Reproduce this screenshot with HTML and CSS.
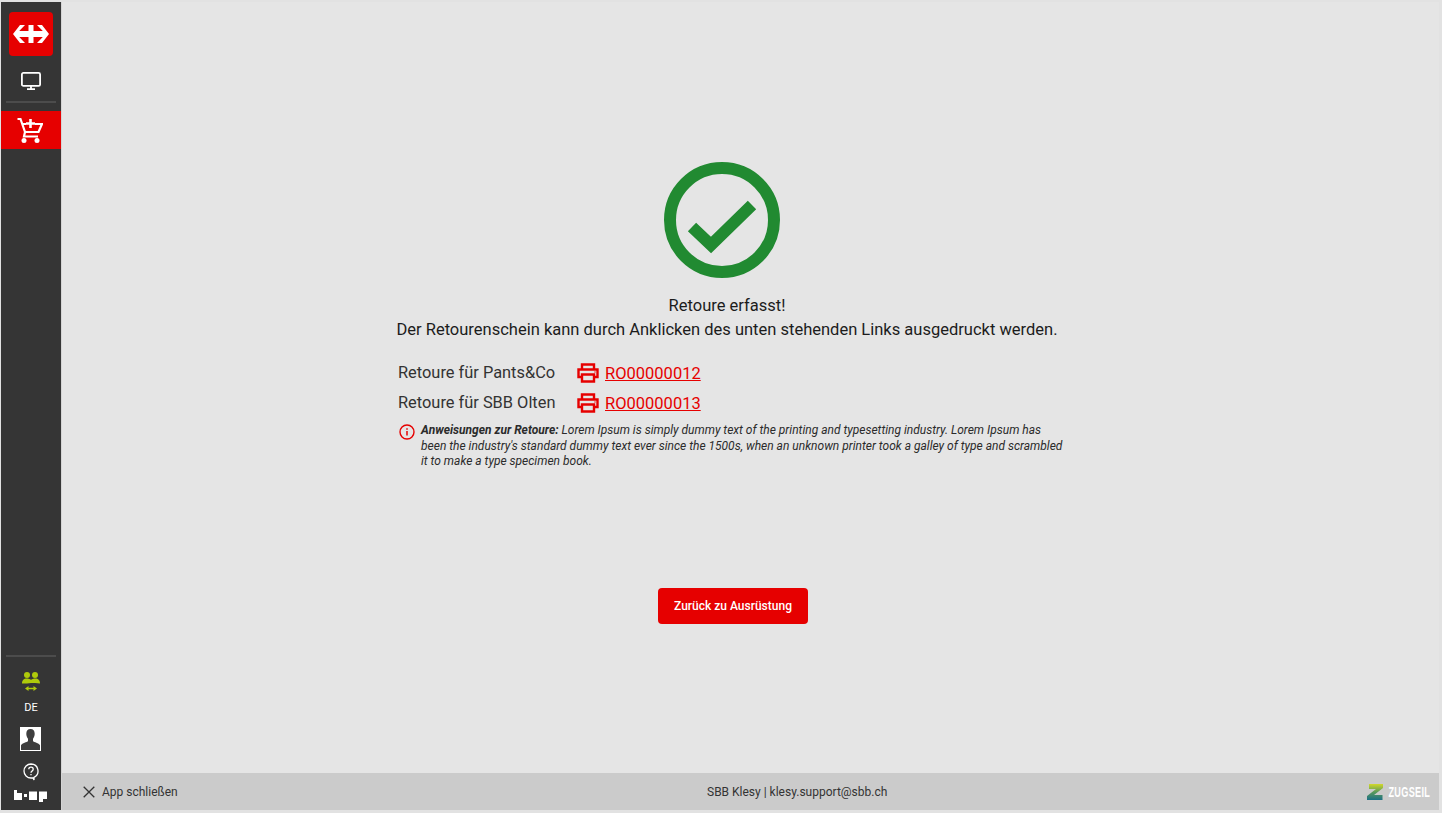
FILE: index.html
```html
<!DOCTYPE html>
<html lang="de">
<head>
    <meta charset="UTF-8">
    <title>SBB Klesy</title>
    <link rel="stylesheet" href="styles.css">
</head>
<body>
    <div class="app">
        <nav class="sidebar">
            <a class="logo">
                <svg width="36" height="18" viewBox="0 0 36 18"><path fill="#fff" d="M7 0h5L6.200 6h9.300V0h5v6h9.300L24 0h5l7 9-7 9h-5l5.800-6h-9.300v6h-5v-6H6.200L12 18H7L0 9z"/></svg>
            </a>
            <a class="nav-item nav-screen">
                <svg width="22" height="20" viewBox="0 0 22 20" fill="none" stroke="#fff" stroke-width="1.800"><rect x="1.900" y="1.900" width="18.200" height="13" rx="1.500"/><path d="M11 15v3M7 18.100h8"/></svg>
            </a>
            <hr class="nav-line">
            <a class="nav-item nav-cart">
                <svg width="26" height="27" viewBox="0 0 26 27" fill="none" stroke="#fff" stroke-width="2.200"><path d="M.5 2h3L8 15l-1 4.500h14M4.800 7H9M18 7h7l-3.500 8H8"/><path d="M13.500 2v9M9 6.500h9" stroke-width="2.600"/><circle cx="7" cy="23.500" r="2.500" fill="#fff" stroke="none"/><circle cx="20" cy="23.500" r="2.500" fill="#fff" stroke="none"/></svg>
            </a>
            <div class="sidebar-bottom">
                <hr class="nav-line">
                <a class="nav-users">
                    <svg width="18" height="19" viewBox="0 0 18 19" fill="#afca0b"><circle cx="5" cy="3" r="3"/><circle cx="13" cy="3" r="3"/><path d="M0 11.500c0-3.500 2-5 4.500-5 2 0 3.500.5 4.500 1.500 1-1 2.500-1.500 4.500-1.500 2.500 0 4.500 1.500 4.500 5l-5-.5H9l-4 .5z"/><path d="M5 16.500h8" stroke="#afca0b" stroke-width="1.500"/><path d="M6.500 14 3 16.500 6.500 19zM11.500 14l3.500 2.500-3.500 2.500z"/></svg>
                </a>
                <span class="lang">DE</span>
                <a class="avatar">
                    <svg width="21" height="24" viewBox="0 0 21 24"><rect width="21" height="24" fill="#fff"/><path fill="#3e3e3e" d="M10.500 2c2.800 0 4.200 2 4.200 4.800 0 2.200-.8 3.800-1.700 4.900v2.600c1 1 5.800 1.700 7 3.900V23H1v-4.800c1.200-2.200 6-2.900 7-3.900v-2.600C7.100 10.600 6.300 9 6.300 6.800 6.300 4 7.700 2 10.500 2z"/></svg>
                </a>
                <a class="help">
                    <svg width="16" height="18" viewBox="0 0 16 18" fill="none" stroke="#fff" stroke-width="1.300"><path d="M8 1a7 7 0 1 0 0 14h2l1 2v-2.700A7 7 0 0 0 8 1z"/><path d="M5.800 6.300C5.800 5 6.800 4.200 8 4.200s2.200.8 2.200 2c0 1.700-2.200 1.800-2.200 3.500"/><path d="M8 11v1.300"/></svg>
                </a>
                <div class="bap">
                    <svg width="33" height="12" viewBox="0 0 33 12" fill="#fff"><path d="M0 0h3v3h5v7H0zM10 4h3v3h-3zM15 1.500h8V10h-8zM25 1.500h8V9h-4v3h-4z"/></svg>
                </div>
            </div>
        </nav>

        <div class="page">
            <main class="content">
                <svg class="check" width="116" height="116" viewBox="0 0 116 116" fill="none" stroke="#218a31"><circle cx="58" cy="58" r="52" stroke-width="12"/><path d="M28 65 47 83 88 43" stroke-width="12"/></svg>
                <p class="message">Retoure erfasst!<br>Der Retourenschein kann durch Anklicken des unten stehenden Links ausgedruckt werden.</p>

                <div class="returns">
                    <div class="return-row">
                        <span class="return-name">Retoure für Pants&amp;Co</span>
                        <svg class="printer" width="22" height="20" viewBox="0 0 22 20" fill="none" stroke="#e60000" stroke-width="2.400"><path d="M5 6V1.500h12V6M5 14H1.500V6.500h19V14H17"/><path d="M5 11.500h12v7H5z"/><path d="M17.500 9h1" stroke-width="1.500"/></svg>
                        <a class="return-link">RO00000012</a>
                    </div>
                    <div class="return-row">
                        <span class="return-name">Retoure für SBB Olten</span>
                        <svg class="printer" width="22" height="20" viewBox="0 0 22 20" fill="none" stroke="#e60000" stroke-width="2.400"><path d="M5 6V1.500h12V6M5 14H1.500V6.500h19V14H17"/><path d="M5 11.500h12v7H5z"/><path d="M17.500 9h1" stroke-width="1.500"/></svg>
                        <a class="return-link">RO00000013</a>
                    </div>
                </div>

                <div class="note">
                    <svg class="note-icon" width="16" height="16" viewBox="0 0 16 16" fill="none" stroke="#e60000" stroke-width="1.400"><circle cx="8" cy="8" r="7"/><path d="M8 7v4.500" stroke-width="1.500"/><path d="M8 4.200v1.500" stroke-width="1.500"/></svg>
                    <p class="note-text"><b>Anweisungen zur Retoure:</b> Lorem Ipsum is simply dummy text of the printing and typesetting industry. Lorem Ipsum has been the industry's standard dummy text ever since the 1500s, when an unknown printer took a galley of type and scrambled it to make a type specimen book.</p>
                </div>

                <button class="back-btn">Zurück zu Ausrüstung</button>
            </main>

            <footer class="footer">
                <a class="close-app">
                    <svg width="12" height="12" viewBox="0 0 12 12" stroke="#333" stroke-width="1.300"><path d="M.7.700l10.600 10.600M11.300.700.7 11.300"/></svg>
                    App schließen
                </a>
                <span class="support">SBB Klesy | klesy.support@sbb.ch</span>
                <div class="brand">
                    <svg width="16" height="16" viewBox="0 0 16 16"><defs><linearGradient id="zg" x1="0" y1="0" x2="0" y2="1"><stop offset="0" stop-color="#d2d82a"/><stop offset=".5" stop-color="#5a9a5a"/><stop offset="1" stop-color="#1c6f86"/></linearGradient></defs><path fill="url(#zg)" d="M2 0h14v4L7 11h8.500v5H0v-4l9-7H2z"/></svg>
                    <span class="brand-name">ZUGSEIL</span>
                </div>
            </footer>
        </div>
    </div>
</body>
</html>
```
FILE: styles.css
```css
* {
    margin: 0;
    padding: 0;
    box-sizing: border-box;
}

html, body {
    height: 100%;
    overflow: hidden;
}

body {
    background: #f1f1f1;
    font-family: 'Roboto', sans-serif;
    color: #222;
}

.app {
    display: flex;
    height: 813px;
    padding: 2px 3px 3px 1px;
    background: #e2e2e2;
}

/* Sidebar */
.sidebar {
    width: 61px;
    flex-shrink: 0;
    background: #353535;
    display: flex;
    flex-direction: column;
    align-items: center;
    border-right: 1px solid #d4d4d4;
}

.logo {
    width: 44px;
    height: 44px;
    margin-top: 10px;
    background: #e60000;
    border-radius: 4px;
    display: flex;
    align-items: center;
    justify-content: center;
}

.nav-item {
    display: flex;
    align-items: center;
    justify-content: center;
}

.nav-screen {
    height: 20px;
    margin-top: 15px;
}

.nav-line {
    width: 50px;
    height: 2px;
    border: 0;
    background: #4c4c4c;
}

.nav-screen + .nav-line {
    margin-top: 10px;
}

.nav-cart {
    width: 100%;
    height: 38px;
    margin-top: 8px;
    padding-right: 2px;
    background: #e60000;
}

.sidebar-bottom {
    margin-top: auto;
    display: flex;
    flex-direction: column;
    align-items: center;
    width: 100%;
    padding-bottom: 8px;
}

.nav-users {
    display: flex;
    margin-top: 15px;
}

.lang {
    margin-top: 10px;
    font-size: 11px;
    line-height: 13px;
    color: #fff;
}

.avatar {
    display: flex;
    margin-top: 13px;
    padding-right: 2px;
}

.help {
    display: flex;
    margin-top: 12px;
}

.bap {
    display: flex;
    margin-top: 9px;
    padding-right: 2px;
}

/* Main */
.page {
    flex: 1;
    display: flex;
    flex-direction: column;
    background: #e5e5e5;
}

.content {
    flex: 1;
    padding: 160px 0 0 335px;
}

.check {
    display: block;
    margin-left: 267px;
}

.message {
    width: 680px;
    margin-top: 16px;
    margin-left: -10px;
    font-size: 16.500px;
    line-height: 24px;
    text-align: center;
    color: #1c1c1c;
}

.returns {
    margin-top: 15px;
}

.return-row {
    display: flex;
    align-items: center;
    height: 30px;
    font-size: 16.400px;
    color: #333;
}

.return-name {
    width: 179px;
    margin-left: 1px;
}

.printer {
    margin-top: 2px;
    margin-right: 6px;
}

.return-link {
    margin-top: 2px;
    font-size: 16.500px;
    color: #e60000;
    text-decoration: underline;
}

.note {
    display: flex;
    gap: 6px;
    width: 669px;
    margin-top: 6px;
    margin-left: 2px;
}

.note-icon {
    flex-shrink: 0;
    margin-top: 1px;
}

.note-text {
    font-size: 12px;
    line-height: 15.500px;
    font-style: italic;
    color: #2b2b2b;
}

.back-btn {
    display: block;
    width: 150px;
    height: 36px;
    margin-top: 118px;
    margin-left: 261px;
    background: #e60000;
    color: #fff;
    border: 0;
    border-radius: 4px;
    font-family: 'Roboto', sans-serif;
    font-size: 12px;
    font-weight: 500;
}

/* Footer */
.footer {
    height: 37px;
    flex-shrink: 0;
    display: flex;
    align-items: center;
    background: #cbcbcb;
    font-size: 12px;
    color: #333;
    padding: 0 9px 0 21px;
}

.close-app {
    display: flex;
    align-items: center;
    gap: 7px;
    width: 624px;
}

.support {
    flex: 1;
}

.brand {
    display: flex;
    align-items: center;
}

.brand-name {
    margin-left: -17px;
    font-family: 'Liberation Sans', sans-serif;
    font-size: 14px;
    font-weight: 700;
    letter-spacing: .5px;
    color: #fff;
    transform: scaleX(.65);
    transform-origin: right center;
}
```
